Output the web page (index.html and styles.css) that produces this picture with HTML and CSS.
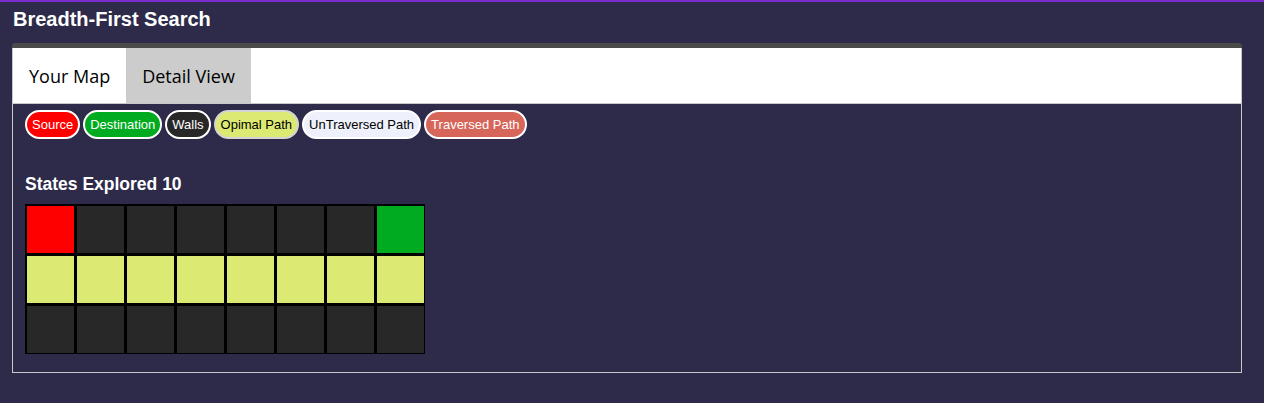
FILE: index.html
```html
<!DOCTYPE html>
<html>
<head>
<meta charset="utf-8">
<link rel="stylesheet" href="styles.css">
</head>
<body>
<header class="topbar">
  <h1 class="title">Breadth-First Search</h1>
</header>
<section class="card">
  <div class="card-cap"></div>
  <nav class="tabs">
    <div class="tab">Your Map</div>
    <div class="tab active">Detail View</div>
  </nav>
  <div class="panel">
    <div class="legend">
      <span class="pill pill-source">Source</span>
      <span class="pill pill-dest">Destination</span>
      <span class="pill pill-wall">Walls</span>
      <span class="pill pill-opt">Opimal Path</span>
      <span class="pill pill-untrav">UnTraversed Path</span>
      <span class="pill pill-trav">Traversed Path</span>
    </div>
    <h2 class="states">States Explored 10</h2>
    <div class="grid">
      <div class="cell source"></div>
      <div class="cell wall"></div>
      <div class="cell wall"></div>
      <div class="cell wall"></div>
      <div class="cell wall"></div>
      <div class="cell wall"></div>
      <div class="cell wall"></div>
      <div class="cell dest"></div>
      <div class="cell opt"></div>
      <div class="cell opt"></div>
      <div class="cell opt"></div>
      <div class="cell opt"></div>
      <div class="cell opt"></div>
      <div class="cell opt"></div>
      <div class="cell opt"></div>
      <div class="cell opt"></div>
      <div class="cell wall"></div>
      <div class="cell wall"></div>
      <div class="cell wall"></div>
      <div class="cell wall"></div>
      <div class="cell wall"></div>
      <div class="cell wall"></div>
      <div class="cell wall"></div>
      <div class="cell wall"></div>
    </div>
  </div>
</section>
</body>
</html>
```
FILE: styles.css
```css
html, body {
  margin: 0;
  padding: 0;
}
body {
  background: #2d2a4a;
  border-top: 2px solid #7b2bd0;
  font-family: "Liberation Sans", Arial, sans-serif;
  min-height: 401px;
}
.topbar {
  padding: 6px 13px 0 13px;
  height: 35px;
}
.title {
  margin: 0;
  font-size: 20px;
  font-weight: bold;
  color: #ffffff;
  line-height: 22px;
}
.card {
  margin-left: 12px;
  width: 1230px;
}
.card-cap {
  height: 5px;
  background: #4a4a4a;
  border-radius: 3px 3px 0 0;
}
.tabs {
  display: flex;
  background: #ffffff;
  height: 55px;
  border-left: 1px solid #c8c8c8;
  border-right: 1px solid #c8c8c8;
  border-bottom: 1px solid #c8c8c8;
}
.tab {
  display: flex;
  align-items: center;
  padding: 0 16px;
  font-family: "Open Sans", sans-serif;
  font-size: 18px;
  color: #000000;
  padding-top: 1px;
}
.tab.active {
  background: #cccccc;
}
.panel {
  border-left: 1px solid #c8c8c8;
  border-right: 1px solid #c8c8c8;
  border-bottom: 1px solid #c8c8c8;
  padding: 6px 12px 18px 12px;
  height: 244px;
}
.legend {
  display: flex;
  gap: 3px;
}
.pill {
  display: inline-flex;
  align-items: center;
  height: 29px;
  box-sizing: border-box;
  border: 2px solid #ffffff;
  border-radius: 15px;
  padding: 0 5px;
  font-size: 13px;
  color: #ffffff;
}
.pill-source { background: #ff0000; }
.pill-dest { background: #00ab1f; }
.pill-wall { background: #282828; }
.pill-opt { background: #dcea73; color: #000000; border-color: #d4d4d4; }
.pill-untrav { background: #eef0fc; color: #000000; }
.pill-trav { background: #d6665a; }
.states {
  margin: 36px 0 10px 0;
  font-size: 17.5px;
  font-weight: bold;
  color: #ffffff;
  line-height: 19px;
}
.grid {
  display: grid;
  grid-template-columns: repeat(8, 50px);
  grid-auto-rows: 50px;
  width: 400px;
}
.cell {
  box-sizing: border-box;
  border-style: solid;
  border-color: #000000;
  border-width: 2px 1px 1px 2px;
}
.source { background: #ff0000; }
.dest { background: #00ab1f; }
.wall { background: #282828; }
.opt { background: #dcea73; }
```
